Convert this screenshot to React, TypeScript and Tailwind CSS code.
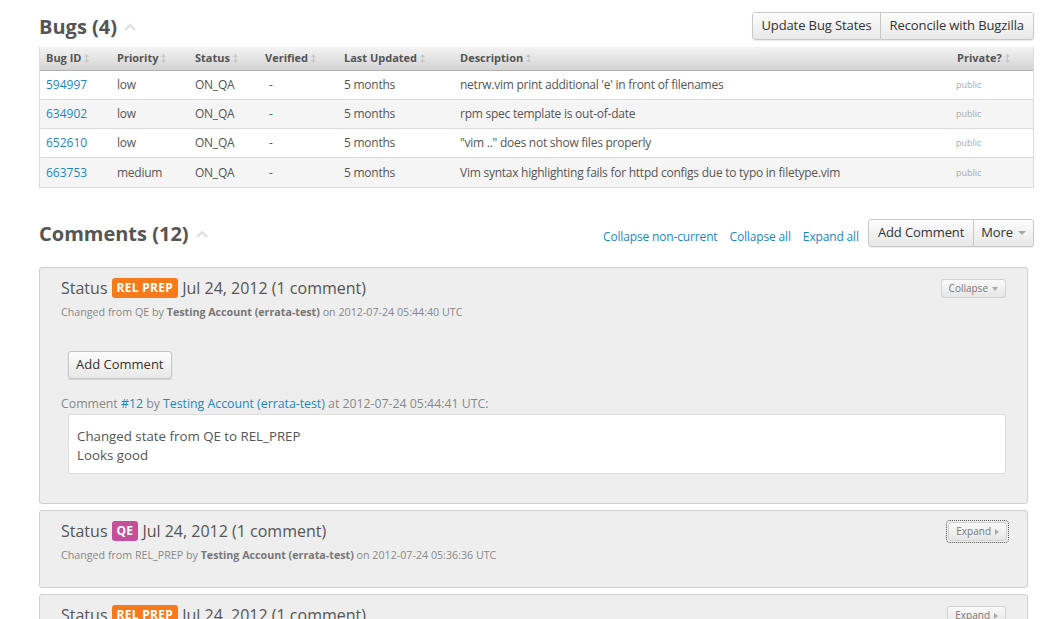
import React from "react";

const F = { fontFamily: '"Open Sans", "DejaVu Sans", sans-serif' };

function SortIcon() {
  return (
    <svg width="5" height="9" viewBox="0 0 5 9" className="inline-block ml-[3px] align-[-1px]">
      <path d="M2.5 0 L5 3 H0 Z" fill="#c8c8c8" />
      <rect x="2" y="3" width="1" height="3" fill="#c8c8c8" />
      <path d="M2.5 9 L5 6 H0 Z" fill="#c8c8c8" />
    </svg>
  );
}

function CaretUp() {
  return (
    <svg width="12" height="8" viewBox="0 0 12 8" className="inline-block ml-[7px]">
      <path d="M1 7 L6 2 L11 7" stroke="#e0e0e0" strokeWidth="2.4" fill="none" />
    </svg>
  );
}

const bugs = [
  ["594997", "low", "netrw.vim print additional 'e' in front of filenames"],
  ["634902", "low", "rpm spec template is out-of-date"],
  ["652610", "low", "\"vim ..\" does not show files properly"],
  ["663753", "medium", "Vim syntax highlighting fails for httpd configs due to typo in filetype.vim"],
];

const cols = [
  ["Bug ID", "w-[71px]"],
  ["Priority", "w-[78px]"],
  ["Status", "w-[70px]"],
  ["Verified", "w-[79px]"],
  ["Last Updated", "w-[116px]"],
  ["Description", "flex-1"],
  ["Private?", "w-[82px]"],
];

function Btn({ children, className = "" }: { children: React.ReactNode; className?: string }) {
  return (
    <div
      className={
        "h-[28px] flex items-center text-[13px] tracking-[-0.1px] text-[#333] bg-gradient-to-b from-[#fdfdfd] to-[#e8e8e8] border border-[#c8c8c8] " +
        className
      }
    >
      {children}
    </div>
  );
}

function SmallBtn({ label, arrow, focus }: { label: string; arrow: "down" | "right"; focus?: boolean }) {
  return (
    <div className={focus ? "outline outline-1 outline-dotted outline-[#555] outline-offset-[1px] rounded-[2px]" : ""}>
      <div className="h-[19px] px-[7px] flex items-center gap-[4px] text-[10px] text-[#777] bg-gradient-to-b from-[#fafafa] to-[#e6e6e6] border border-[#d2d2d2] rounded-[3px]">
        {label}
        {arrow === "down" ? (
          <svg width="6" height="4" viewBox="0 0 6 4"><path d="M0 0 H6 L3 4 Z" fill="#aaa" /></svg>
        ) : (
          <svg width="4" height="6" viewBox="0 0 4 6"><path d="M0 0 V6 L4 3 Z" fill="#aaa" /></svg>
        )}
      </div>
    </div>
  );
}

function Badge({ text, color }: { text: string; color: string }) {
  return (
    <span
      className={"inline-flex items-center h-[20px] px-[5px] rounded-[3px] text-white font-bold text-[12px] tracking-[0.3px] mx-[4px] " + color}
    >
      {text}
    </span>
  );
}

function StatusHeader({ badge, color, from, time, btn }: { badge: string; color: string; from: string; time: string; btn: React.ReactNode }) {
  return (
    <div className="flex justify-between">
      <div>
        <div className="flex items-center text-[16px] text-[#555] h-[20px]">
          Status<Badge text={badge} color={color} />Jul 24, 2012 (1 comment)
        </div>
        <div className="text-[10.7px] text-[#888] mt-[7px] leading-[15px]">
          Changed from {from} by <span className="font-bold text-[#777]">Testing Account (errata-test)</span> on {time}
        </div>
      </div>
      <div className="pt-[1px]">{btn}</div>
    </div>
  );
}

export default function App() {
  return (
    <div style={F} className="bg-white w-[1059px] h-[619px] overflow-hidden pl-[39px] pr-[25px] text-[#555]">
      {/* Bugs header */}
      <div className="flex justify-between items-end pt-[12px]">
        <div className="text-[20px] font-bold text-[#555] flex items-center leading-none pb-[3px]">
          Bugs (4)
          <CaretUp />
        </div>
        <div className="flex rounded-[3px] overflow-hidden shadow-[0_1px_1px_rgba(0,0,0,0.08)]">
          <Btn className="px-[8px] rounded-l-[3px]">Update Bug States</Btn>
          <Btn className="px-[9px] border-l-0 rounded-r-[3px]">Reconcile with Bugzilla</Btn>
        </div>
      </div>

      {/* Table */}
      <div className="mt-[7px] border border-[#dcdcdc] border-t-0">
        <div className="flex h-[24px] items-center bg-gradient-to-b from-[#f4f4f4] to-[#d3d3d3] border-b border-[#b0b0b0] text-[11px] font-bold text-[#555]">
          {cols.map(([c, w]) => (
            <div key={c} className={w + " pl-[6px]"}>
              {c}
              <SortIcon />
            </div>
          ))}
        </div>
        {bugs.map(([id, pri, desc], i) => (
          <div
            key={id}
            className={
              "flex h-[29px] items-center text-[12px] tracking-[-0.25px] text-[#555] " +
              (i % 2 === 1 ? "bg-[#f5f5f5] " : "bg-white ") +
              (i < 3 ? "border-b border-[#dcdcdc]" : "")
            }
          >
            <div className="w-[71px] pl-[6px] text-[#1a87c9] tracking-normal">{id}</div>
            <div className="w-[78px] pl-[6px]">{pri}</div>
            <div className="w-[70px] pl-[6px]">ON_QA</div>
            <div className="w-[79px] pl-[10px]">-</div>
            <div className="w-[116px] pl-[6px]">5 months</div>
            <div className="flex-1 pl-[6px]">{desc}</div>
            <div className="w-[82px] pl-[5px] text-[9px] tracking-normal text-[#aaa]">public</div>
          </div>
        ))}
      </div>

      {/* Comments header */}
      <div className="flex justify-between items-center mt-[31px]">
        <div className="text-[20px] font-bold text-[#555] flex items-center leading-none pt-[2px]">
          Comments (12)
          <CaretUp />
        </div>
        <div className="flex items-center">
          <div className="flex gap-[12px] text-[12px] tracking-[-0.15px] text-[#1a87c9] mr-[9px] pt-[8px]">
            <span>Collapse non-current</span>
            <span>Collapse all</span>
            <span>Expand all</span>
          </div>
          <div className="flex rounded-[3px] overflow-hidden shadow-[0_1px_1px_rgba(0,0,0,0.08)]">
            <Btn className="px-[9px] rounded-l-[3px]">Add Comment</Btn>
            <Btn className="px-[7px] border-l-0 rounded-r-[3px] gap-[5px]">
              More
              <svg width="8" height="4" viewBox="0 0 8 4"><path d="M0 0 H8 L4 4 Z" fill="#aaa" /></svg>
            </Btn>
          </div>
        </div>
      </div>

      {/* Comment boxes */}
      <div className="mr-[6px] mt-[20px] flex flex-col gap-[6px]">
        <div className="bg-[#eeeeee] border border-[#cfcfcf] rounded-[3px] pl-[21px] pr-[21px] pt-[10px] pb-[29px]">
          <StatusHeader
            badge="REL PREP"
            color="bg-[#f97a1b]"
            from="QE"
            time="2012-07-24 05:44:40 UTC"
            btn={<SmallBtn label="Collapse" arrow="down" />}
          />
          <div className="mt-[31px] ml-[7px]">
            <div className="inline-flex h-[28px] items-center px-[7px] text-[13px] text-[#333] bg-gradient-to-b from-[#fdfdfd] to-[#e8e8e8] border border-[#c4c4c4] rounded-[3px] shadow-[0_1px_1px_rgba(0,0,0,0.12)]">
              Add Comment
            </div>
          </div>
          <div className="mt-[16px] text-[12.3px] leading-[18px] text-[#888]">
            Comment <span className="text-[#1a87c9]">#12</span> by{" "}
            <span className="text-[#1a87c9]">Testing Account (errata-test)</span> at 2012-07-24 05:44:41 UTC:
          </div>
          <div className="mt-[1px] ml-[7px] bg-white border border-[#dedede] rounded-[3px] pl-[8px] pt-[12px] pb-[8px] text-[13.3px] leading-[19px] text-[#555]">
            <div>Changed state from QE to REL_PREP</div>
            <div>Looks good</div>
          </div>
        </div>

        <div className="bg-[#eeeeee] border border-[#cfcfcf] rounded-[3px] pl-[21px] pr-[20px] pt-[10px] pb-[24px]">
          <StatusHeader
            badge="QE"
            color="bg-[#c4509a]"
            from="REL_PREP"
            time="2012-07-24 05:36:36 UTC"
            btn={<SmallBtn label="Expand" arrow="right" focus />}
          />
        </div>

        <div className="bg-[#eeeeee] border border-[#cfcfcf] rounded-[3px] pl-[21px] pr-[21px] pt-[10px] pb-[24px]">
          <StatusHeader
            badge="REL PREP"
            color="bg-[#f97a1b]"
            from="QE"
            time="2012-07-24 05:30:00 UTC"
            btn={<SmallBtn label="Expand" arrow="right" />}
          />
        </div>
      </div>
    </div>
  );
}
